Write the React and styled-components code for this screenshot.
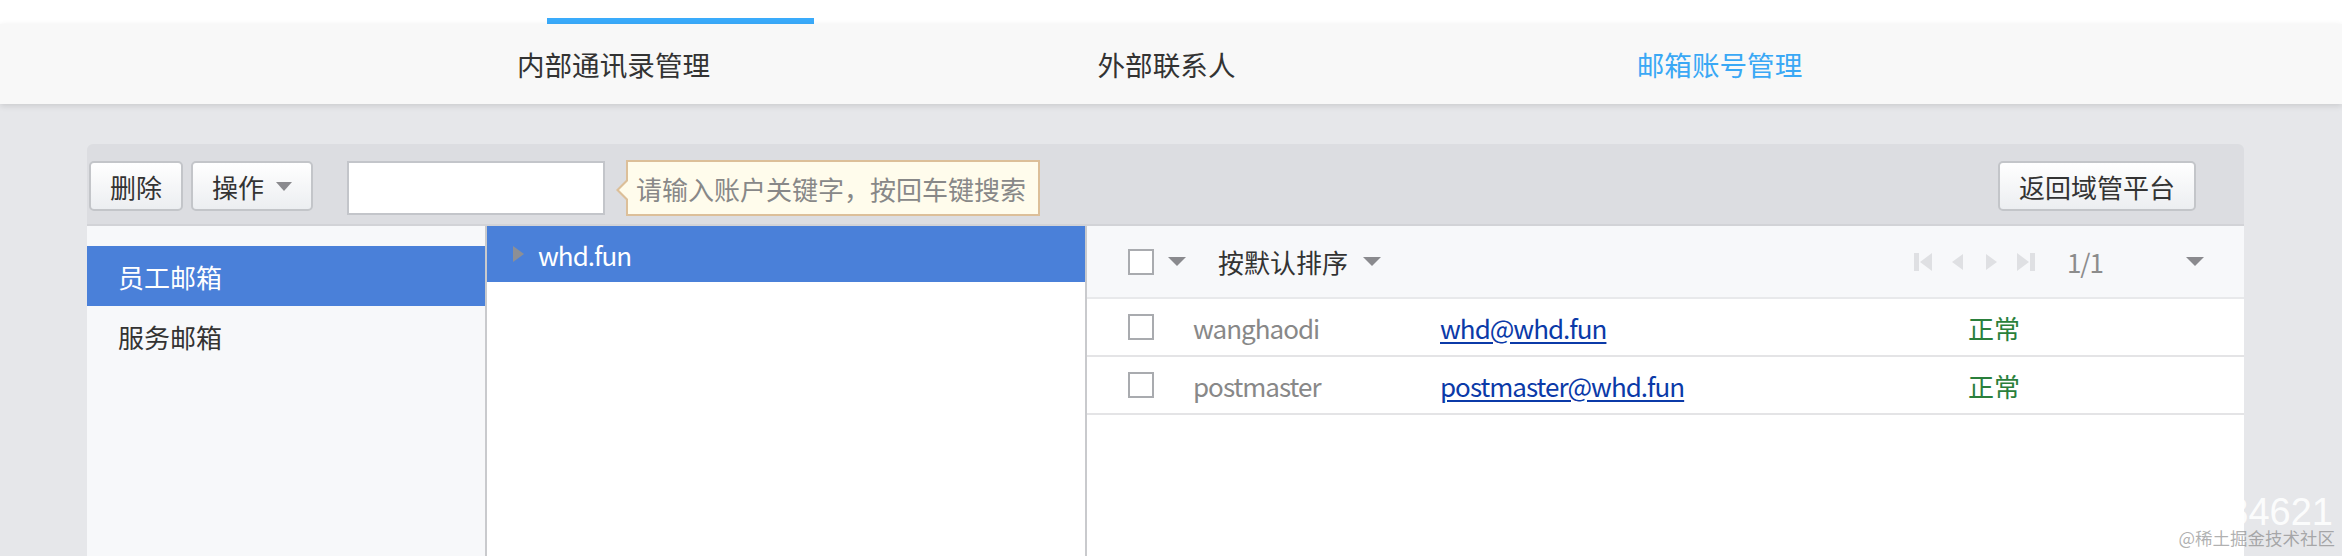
import React from "react";
import styled, { createGlobalStyle, css } from "styled-components";

const GlobalStyle = createGlobalStyle`
  html, body { margin: 0; padding: 0; overflow: hidden; }
  body {
    background: #e6e7ea;
    font-family: "Noto Sans CJK SC", "Noto Sans", sans-serif;
    color: #333;
  }
  * { box-sizing: border-box; }
`;

const Page = styled.div`
  position: relative;
  width: 2342px;
  height: 556px;
  overflow: hidden;
`;

const TopStrip = styled.div`
  height: 24px;
  background: #fff;
  display: flex;
  align-items: flex-end;
`;

const Indicator = styled.div`
  margin-left: 547px;
  width: 267px;
  height: 6px;
  background: #3aabfb;
`;

const Nav = styled.nav`
  position: relative;
  z-index: 1;
  height: 80px;
  background: #f8f8f8;
  display: flex;
  padding-left: 337px;
  box-shadow: 0 2px 6px rgba(0, 0, 0, 0.12);
`;

const Tab = styled.div`
  width: 553px;
  display: flex;
  align-items: center;
  justify-content: center;
  font-size: 27.6px;
  color: ${(p) => (p.$active ? "#3aa8f5" : "#333")};
`;

const Main = styled.main`
  padding: 40px 98px 0 87px;
`;

const Panel = styled.section`
  background: #dcdde1;
  border-radius: 6px 6px 0 0;
`;

const Toolbar = styled.div`
  height: 82px;
  display: flex;
  align-items: flex-start;
  padding: 17px 48px 0 2px;
  border-bottom: 2px solid #d2d3d7;
`;

const Button = styled.button`
  height: 50px;
  padding: 0 ${(p) => p.$pad || 20}px;
  margin-left: ${(p) => p.$ml || 0}px;
  border: 2px solid #c3c5c9;
  border-radius: 5px;
  background: linear-gradient(#ffffff, #eceef1);
  font-family: inherit;
  font-size: 26px;
  color: #333;
  display: flex;
  align-items: center;
  gap: 12px;
  cursor: pointer;
  ${(p) => p.$right && css`margin-left: auto;`}
`;

const Caret = styled.span`
  display: inline-block;
  width: 0;
  height: 0;
  border-left: ${(p) => p.$w || 9}px solid transparent;
  border-right: ${(p) => p.$w || 9}px solid transparent;
  border-top: ${(p) => p.$h || 9}px solid ${(p) => p.$color || "#8a8a8e"};
  margin-left: ${(p) => p.$ml || 0}px;
`;

const SearchInput = styled.input`
  margin-left: 34px;
  width: 258px;
  height: 54px;
  border: 2px solid #c3c5ca;
  background: #fff;
  font-family: inherit;
  font-size: 26px;
  outline: none;
`;

const Tip = styled.div`
  position: relative;
  margin-left: 21px;
  margin-top: -1px;
  width: 414px;
  height: 56px;
  border: 2px solid #dcbf99;
  background: #fffcec;
  color: #888;
  font-size: 26px;
  display: flex;
  align-items: center;
  padding-left: 8px;
  white-space: nowrap;
  &::before {
    content: "";
    position: absolute;
    left: -12px;
    top: 17px;
    border-top: 11px solid transparent;
    border-bottom: 11px solid transparent;
    border-right: 11px solid #dcbf99;
  }
  &::after {
    content: "";
    position: absolute;
    left: -9px;
    top: 18px;
    border-top: 10px solid transparent;
    border-bottom: 10px solid transparent;
    border-right: 10px solid #fffcec;
  }
`;

const Body = styled.div`
  display: flex;
  height: 340px;
`;

const CategoryCol = styled.div`
  width: 400px;
  background: #f7f8fa;
  border-right: 2px solid #c9cacd;
  padding-top: 20px;
`;

const CategoryItem = styled.div`
  height: 60px;
  display: flex;
  align-items: center;
  padding-left: 31px;
  font-size: 26px;
  background: ${(p) => (p.$active ? "#4a80d9" : "transparent")};
  color: ${(p) => (p.$active ? "#fff" : "#333")};
`;

const DomainCol = styled.div`
  width: 600px;
  background: #fff;
  border-right: 2px solid #c9cacd;
`;

const DomainRow = styled.div`
  height: 56px;
  background: #4a80d9;
  color: #fff;
  display: flex;
  align-items: center;
  padding-left: 26px;
  font-size: 26px;
  letter-spacing: -1px;
`;

const SideArrow = styled.span`
  width: 0;
  height: 0;
  border-top: 8px solid transparent;
  border-bottom: 8px solid transparent;
  border-left: 11px solid #8d8f95;
  margin-right: 14px;
`;

const ListCol = styled.div`
  flex: 1;
  background: #fff;
`;

const ListHeader = styled.div`
  height: 73px;
  background: #f7f8fa;
  border-bottom: 2px solid #e8e9eb;
  display: flex;
  align-items: center;
  padding: 0 40px 0 41px;
`;

const Check = styled.span`
  display: inline-block;
  width: 26px;
  height: 26px;
  border: 2px solid #a9abaf;
  background: #fff;
`;

const SortLabel = styled.span`
  margin-left: 32px;
  font-size: 26px;
  color: #333;
`;

const Pager = styled.div`
  margin-left: auto;
  display: flex;
  align-items: center;
`;

const PagerIcon = styled.svg`
  display: block;
  margin-right: ${(p) => p.$mr}px;
`;

const PageCount = styled.span`
  font-size: 26px;
  letter-spacing: -1px;
  color: #8c8c8c;
  margin-left: 32px;
  margin-right: 83px;
`;

const Row = styled.div`
  height: 58px;
  border-bottom: 2px solid #e4e4e6;
  display: grid;
  grid-template-columns: 65px 247px 528px auto;
  align-items: center;
  padding-left: 41px;
  font-size: 26px;
`;

const Name = styled.span`
  color: #888;
  letter-spacing: -1px;
`;

const Mail = styled.a`
  color: #0b3aa8;
  letter-spacing: -1px;
  text-decoration: underline;
  text-underline-offset: 3px;
  justify-self: start;
`;

const Status = styled.span`
  color: #2a7f3b;
`;

const Watermark = styled.div`
  position: absolute;
  right: 7px;
  bottom: 8px;
  display: flex;
  flex-direction: column;
  align-items: flex-end;
  pointer-events: none;
`;

const WmNumber = styled.span`
  font-family: "Liberation Sans", sans-serif;
  font-size: 38px;
  line-height: 0.8;
  color: rgba(255, 255, 255, 0.9);
  margin-right: 2px;
`;

const WmText = styled.span`
  font-family: "Noto Sans CJK SC", sans-serif;
  font-size: 17.5px;
  line-height: 1.2;
  color: rgba(110, 110, 110, 0.55);
`;

const pagerColor = "#dfe0e3";

export default function App() {
  return (
    <Page>
      <GlobalStyle />
      <TopStrip>
        <Indicator />
      </TopStrip>
      <Nav>
        <Tab>内部通讯录管理</Tab>
        <Tab>外部联系人</Tab>
        <Tab $active>邮箱账号管理</Tab>
      </Nav>
      <Main>
        <Panel>
          <Toolbar>
            <Button $pad={19}>删除</Button>
            <Button $pad={19} $ml={8}>
              操作
              <Caret $w={8.5} $h={9} />
            </Button>
            <SearchInput />
            <Tip>请输入账户关键字，按回车键搜索</Tip>
            <Button $right $pad={19}>返回域管平台</Button>
          </Toolbar>
          <Body>
            <CategoryCol>
              <CategoryItem $active>员工邮箱</CategoryItem>
              <CategoryItem>服务邮箱</CategoryItem>
            </CategoryCol>
            <DomainCol>
              <DomainRow>
                <SideArrow />
                whd.fun
              </DomainRow>
            </DomainCol>
            <ListCol>
              <ListHeader>
                <Check />
                <Caret $ml={14} />
                <SortLabel>按默认排序</SortLabel>
                <Caret $ml={15} />
                <Pager>
                  <PagerIcon width="18" height="18" viewBox="0 0 18 18" $mr={20}>
                    <rect x="0" y="0" width="5" height="18" fill={pagerColor} />
                    <polygon points="18,0 18,18 6,9" fill={pagerColor} />
                  </PagerIcon>
                  <PagerIcon width="11" height="18" viewBox="0 0 11 18" $mr={23}>
                    <polygon points="11,1 11,17 0,9" fill={pagerColor} />
                  </PagerIcon>
                  <PagerIcon width="11" height="18" viewBox="0 0 11 18" $mr={20}>
                    <polygon points="0,1 0,17 11,9" fill={pagerColor} />
                  </PagerIcon>
                  <PagerIcon width="18" height="18" viewBox="0 0 18 18" $mr={0}>
                    <polygon points="0,0 0,18 12,9" fill={pagerColor} />
                    <rect x="13" y="0" width="5" height="18" fill={pagerColor} />
                  </PagerIcon>
                  <PageCount>1/1</PageCount>
                  <Caret />
                </Pager>
              </ListHeader>
              <Row>
                <Check />
                <Name>wanghaodi</Name>
                <Mail href="#">whd@whd.fun</Mail>
                <Status>正常</Status>
              </Row>
              <Row>
                <Check />
                <Name>postmaster</Name>
                <Mail href="#">postmaster@whd.fun</Mail>
                <Status>正常</Status>
              </Row>
            </ListCol>
          </Body>
        </Panel>
      </Main>
      <Watermark>
        <WmNumber>34621</WmNumber>
        <WmText>@稀土掘金技术社区</WmText>
      </Watermark>
    </Page>
  );
}
